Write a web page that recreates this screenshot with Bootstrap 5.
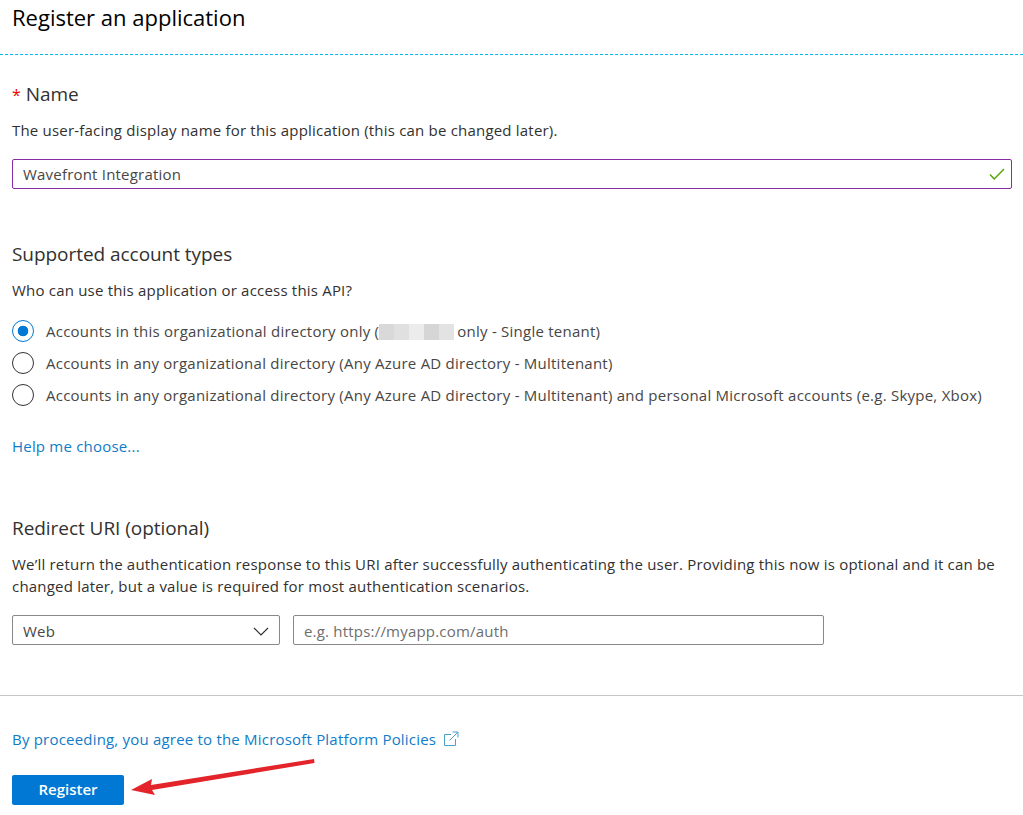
<!DOCTYPE html>
<html lang="en"><head><meta charset="utf-8"><title>Register an application</title>
<link href="https://cdn.jsdelivr.net/npm/bootstrap@5.3.0/dist/css/bootstrap.min.css" rel="stylesheet">
<style>
html,body{height:815px;overflow:hidden}
body{font-family:"Open Sans","Noto Sans",sans-serif;font-size:15px;line-height:22px;color:#323130;background:#fff;position:relative}
.page-head{height:55px;border-bottom:1px dashed #00bcf2;padding:4px 12px 0}
.page-title{font-size:22px;line-height:26px;font-weight:400;color:#000;margin:0}
.form-body{padding:0 12px}
.sec-title{font-size:19px;line-height:24px;font-weight:400;margin:0;letter-spacing:-.05px;color:#323130}
.req{color:#e00;margin-right:5px;font-size:16px}
.sec-text{margin:0;letter-spacing:.2px;color:#323130}
.name-title{margin-top:27px}
.name-text{margin-top:12px}
.name-box{margin-top:18px;position:relative;width:1000px}
.field{height:30px;font-size:15px;line-height:22px;padding:0 10px;border:1px solid #8a8886;border-radius:2px;color:#484644;font-family:inherit;letter-spacing:.2px;box-shadow:none}
.field:focus{box-shadow:none}
.field::placeholder{color:#6e6e6e;opacity:1}
.name-field{border-color:#8a2da5;background:#fff;padding-right:30px}
.name-check{position:absolute;right:7px;top:9px}
.acct-title{margin-top:53px}
.acct-text{margin-top:13px}
.radios{margin-top:19px;display:flex;flex-direction:column;gap:10px}
.radio-row{display:flex;align-items:center;height:22px;margin:0;padding:0;letter-spacing:.24px;color:#484644}
.radio-row .form-check-input{width:22px;height:22px;margin:0 12px 0 0;flex:none;float:none;border:1.3px solid #333;background-color:#fff;background-image:none;position:relative}
.radio-row .form-check-input:checked{border-color:#0078d4;background-color:#fff;background-image:radial-gradient(circle,#0078d4 0,#0078d4 5px,transparent 5.6px)}
.radio-row .form-check-input:focus{box-shadow:none}
.blur-name{display:inline-flex;height:16px;width:75px;margin:0 3px 0 0;vertical-align:-3px}
.blur-name i{display:block;height:100%}
.help-link{display:block;margin-top:29px}
a.ms-link{color:#0f7cc9;text-decoration:none;letter-spacing:.2px}
.redir-title{margin-top:59px}
.redir-text{margin-top:13px;width:1000px}
.redir-row{margin-top:18px;display:flex;gap:13px}
.web-select{width:268px;display:flex;align-items:center;justify-content:space-between;padding-top:2px}
.uri-input{width:531px;padding-top:1px}
.rule{height:1px;background:#c8c6c4;margin-top:50px;opacity:1;border:0}
.policy{margin:32px 12px 0;display:flex;align-items:center;gap:7px;height:22px}
.reg-btn{margin:25px 0 0 12px;width:112px;height:30px;padding:0 0 2px;background:#0078d4;border:0;border-radius:2px;color:#fff;font-weight:600;font-size:15px;line-height:28px}
.arrow-mark{position:absolute;left:125px;top:752px}
</style></head>
<body>
<div class="page-head"><h1 class="page-title">Register an application</h1></div>
<form class="form-body" onsubmit="return false">
  <h2 class="sec-title name-title"><span class="req">*</span>Name</h2>
  <p class="sec-text name-text">The user-facing display name for this application (this can be changed later).</p>
  <div class="name-box">
    <input class="form-control field name-field" type="text" value="Wavefront Integration" aria-label="Name">
    <svg class="name-check" width="16" height="12" viewBox="0 0 16 12" fill="none"><path d="M1 6.5 5.2 11 15 1" stroke="#57a300" stroke-width="1.4"/></svg>
  </div>
  <h2 class="sec-title acct-title">Supported account types</h2>
  <p class="sec-text acct-text">Who can use this application or access this API?</p>
  <div class="radios">
    <label class="radio-row"><input class="form-check-input" type="radio" name="acct" checked><span>Accounts in this organizational directory only (<span class="blur-name"><i style="width:15px;background:#d9d9d9"></i><i style="width:15px;background:#e0e0e0"></i><i style="width:15px;background:#ececec"></i><i style="width:15px;background:#d6d6d6"></i><i style="width:15px;background:#e3e3e3"></i></span>only - Single tenant)</span></label>
    <label class="radio-row"><input class="form-check-input" type="radio" name="acct"><span>Accounts in any organizational directory (Any Azure AD directory - Multitenant)</span></label>
    <label class="radio-row"><input class="form-check-input" type="radio" name="acct"><span>Accounts in any organizational directory (Any Azure AD directory - Multitenant) and personal Microsoft accounts (e.g. Skype, Xbox)</span></label>
  </div>
  <a class="ms-link help-link" href="#">Help me choose...</a>
  <h2 class="sec-title redir-title">Redirect URI (optional)</h2>
  <p class="sec-text redir-text">We’ll return the authentication response to this URI after successfully authenticating the user. Providing this now is optional and it can be changed later, but a value is required for most authentication scenarios.</p>
  <div class="redir-row">
    <div class="field web-select"><span>Web</span><svg width="16" height="9" viewBox="0 0 16 9" fill="none"><path d="M1 1l7 7 7-7" stroke="#323130" stroke-width="1.2"/></svg></div>
    <input class="form-control field uri-input" type="text" placeholder="e.g. https://myapp.com/auth" aria-label="Redirect URI">
  </div>
</form>
<hr class="rule">
<div class="policy"><a class="ms-link" href="#">By proceeding, you agree to the Microsoft Platform Policies</a>
<svg width="16" height="16" viewBox="0 0 16 16" fill="none" stroke="#4ba3c7" stroke-width="1"><path d="M8 3.500H1.500v11h11V8M9.500 1h5.500v5.500M15 1 6.500 9.500"/></svg></div>
<button class="btn reg-btn" type="button">Register</button>
<svg class="arrow-mark" width="195" height="50" viewBox="0 0 195 50"><path d="M6 38 27 27 26 33 189 7 189.500 11 27 38 30 43Z" fill="#e3242b"/></svg>
</body></html>
